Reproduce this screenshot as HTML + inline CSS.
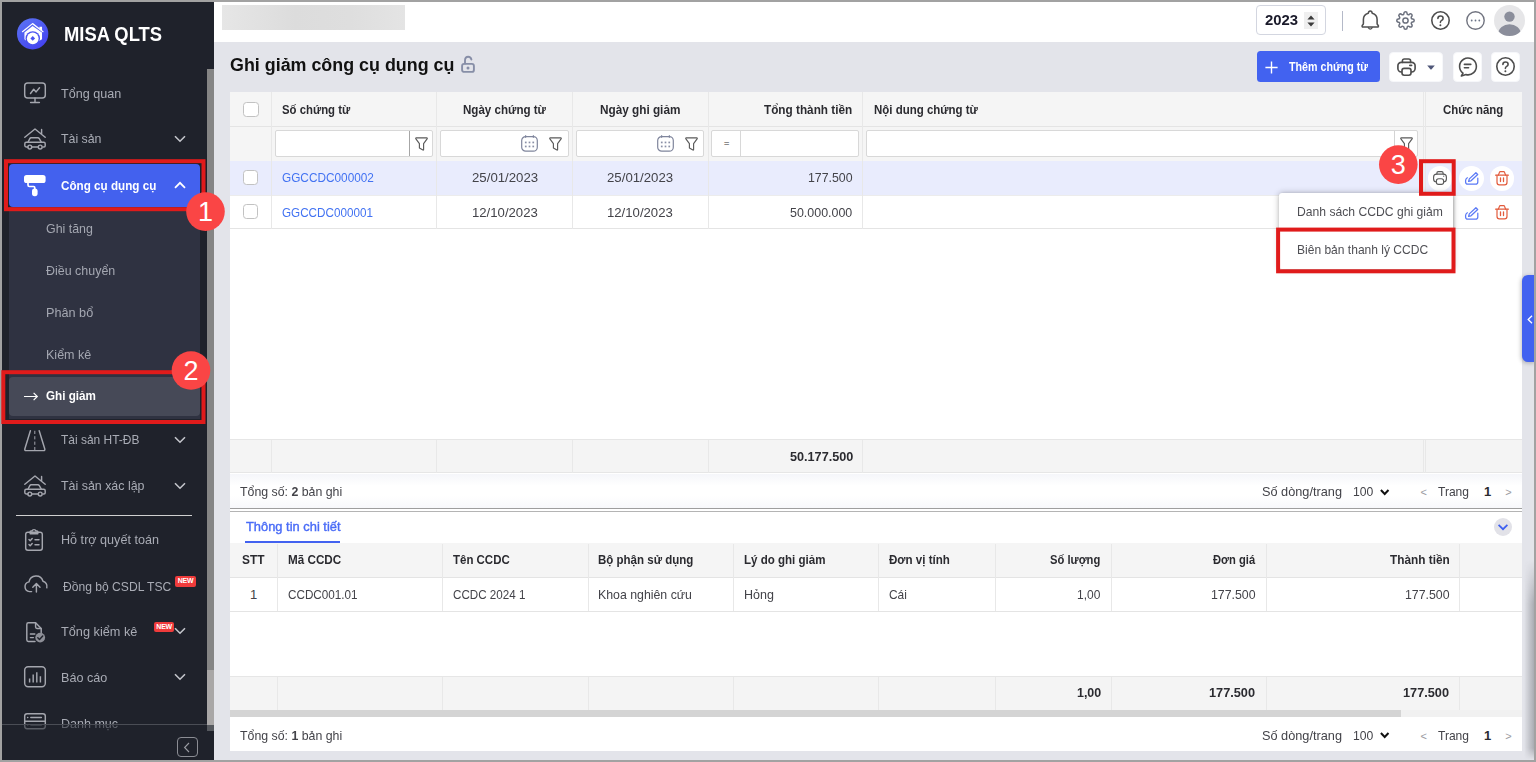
<!DOCTYPE html>
<html lang="vi">
<head>
<meta charset="utf-8">
<title>MISA QLTS - Ghi giảm công cụ dụng cụ</title>
<style>
*{box-sizing:border-box;margin:0;padding:0}
html,body{width:1536px;height:762px;overflow:hidden;background:#a2a2a2;font-family:"Liberation Sans",sans-serif;font-size:13px;color:#434349}
#app{position:absolute;left:0;top:0;width:1536px;height:762px;background:#e3e4ea;overflow:hidden}
#frame{position:absolute;left:0;top:0;width:1536px;height:762px;border:2px solid #a2a2a2;z-index:50;pointer-events:none}
.a{position:absolute}
.t{position:absolute;white-space:nowrap;line-height:16px;height:16px;transform-origin:0 50%}
.b{font-weight:bold}
svg{position:absolute;overflow:visible}
/* sidebar */
#side{position:absolute;left:0;top:0;width:214px;height:762px;background:#1f222b;overflow:hidden}
#side .t{color:#a9acb5}
#side .chev{stroke:#c4c6cc}
.ico{stroke:#a4a6ae;fill:none;stroke-width:1.45;stroke-linecap:round;stroke-linejoin:round}
/* top bar */
#top{position:absolute;left:214px;top:0;width:1322px;height:41.6px;background:#fff}
/* grid */
.hd{background:#f5f5f5}
.vl{position:absolute;width:1px;background:#e8e8e8}
.hl{position:absolute;height:1px;background:#e4e4e4}
.inp{position:absolute;background:#fff;border:1px solid #d8d8d8;border-radius:2px}
.cb{position:absolute;width:15.4px;height:15.2px;background:#fff;border:1px solid #c2c2c2;border-radius:3.5px}
.hdt{color:#2b2b30;font-weight:bold}
.lnk{color:#4272f2}
.new{position:absolute;background:#ef3b3b;border-radius:2px;color:#fff;font-size:7px;font-weight:bold;line-height:10.5px;height:10.5px;text-align:center;letter-spacing:-.2px}
.badge{position:absolute;width:38.5px;height:38.5px;border-radius:50%;background:#fa4444;color:#fff;text-align:center}
</style>
</head>
<body>
<div id="app">

<!-- ================= SIDEBAR ================= -->
<div id="side">
<!-- logo -->
<svg style="left:16.5px;top:18.1px" width="31.3" height="31.6" viewBox="0 0 32 32">
  <defs><linearGradient id="lg" x1="0.1" y1="0" x2="0.8" y2="1"><stop offset="0" stop-color="#5b74f4"/><stop offset="1" stop-color="#4340f0"/></linearGradient></defs>
  <circle cx="16" cy="16" r="16" fill="url(#lg)"/>
  <path d="M5.6 13.8 L15.9 5.6 L26.6 13.8" fill="none" stroke="#fff" stroke-width="1.3" stroke-linecap="round" stroke-linejoin="round"/>
  <path d="M22.9 8.9 h2.7 v4 l-2.7 -2.1z" fill="#fff"/>
  <path d="M7.6 14.6 L15.9 8 L25.6 14.6 V21.6 L23 23 H9.4 L7.6 21.6z" fill="#fff"/>
  <circle cx="16.1" cy="20.7" r="7.4" fill="#4a52f1"/>
  <circle cx="16.1" cy="20.7" r="6" fill="#fff"/>
  <path d="M16.1 18.3 l2.4 2.4 -2.4 2.4 -2.4 -2.4z" fill="#4a52f1"/>
</svg>
<span class="t b" style="left:64px;top:22.4px;font-size:20px;line-height:24px;height:24px;color:#fff;transform:scaleX(0.9187)">MISA QLTS</span>

<!-- Tổng quan -->
<svg class="ico" style="left:24px;top:82px" width="22" height="22" viewBox="0 0 22 22">
  <rect x="0.7" y="1" width="20.6" height="15" rx="3"/><path d="M6.5 11.5 l3.2 -4.2 2.4 2.6 3.4 -4.2"/><path d="M11 16 v4.3 M6.6 20.5 h8.8"/>
</svg>
<span class="t" style="left:61.4px;top:85.5px;transform:scaleX(0.9683)">Tổng quan</span>

<!-- Tài sản -->
<svg class="ico" style="left:24px;top:128px" width="22" height="22" viewBox="0 0 22 22">
  <path d="M0.8 9.2 L11 1 L21.2 9.2 M17.6 1.4 v4.6"/>
  <path d="M4 14.2 l1.8 -3.6 q0.4 -0.8 1.4 -0.8 h6.6 q1 0 1.5 0.8 l2 3.6"/>
  <path d="M2.2 14.2 h17.6 q1.4 0 1.4 1.6 v2 q0 1.2 -1.2 1.2 h-1 M7.6 19 h6.8 M4 19 h-1.8 q-1.4 0 -1.4 -1.4 v-1.8 q0 -1.6 1.4 -1.6"/>
  <circle cx="5.8" cy="19" r="1.9"/><circle cx="16.2" cy="19" r="1.9"/>
</svg>
<span class="t" style="left:61.4px;top:131px;transform:scaleX(0.9498)">Tài sản</span>
<svg style="left:174px;top:135px" width="12" height="8" viewBox="0 0 12 8"><path class="chev" d="M1 1.2 L6 6.2 L11 1.2" fill="none" stroke-width="1.6"/></svg>

<!-- active: Công cụ dụng cụ -->
<div class="a" style="left:9px;top:163.6px;width:191.3px;height:43.6px;background:#4361ee;border-radius:4px"></div>
<svg style="left:24px;top:174.6px" width="22" height="22" viewBox="0 0 22 22">
  <rect x="0" y="0" width="21.6" height="8" rx="2.6" fill="#fff"/>
  <path d="M4 7.5 v2.6 q0 1.4 1.4 1.4 h4.2 q1.2 0 1.2 1.4 v1.5" fill="none" stroke="#fff" stroke-width="1.7"/>
  <rect x="8" y="13.6" width="5.6" height="7.6" rx="2.6" fill="#fff"/>
</svg>
<span class="t b" style="left:61.4px;top:177.6px;color:#fff;transform:scaleX(0.8977)">Công cụ dụng cụ</span>
<svg style="left:174px;top:181px" width="12" height="8" viewBox="0 0 12 8"><path d="M1 6.8 L6 1.8 L11 6.8" fill="none" stroke="#fff" stroke-width="1.8"/></svg>

<!-- submenu -->
<div class="a" style="left:9px;top:207px;width:191.3px;height:212px;background:#2f3241"></div>
<span class="t" style="left:45.7px;top:221px;color:#a4a7b1;transform:scaleX(0.9541)">Ghi tăng</span>
<span class="t" style="left:45.7px;top:263px;color:#a4a7b1;transform:scaleX(0.9588)">Điều chuyển</span>
<span class="t" style="left:45.7px;top:305px;color:#a4a7b1;transform:scaleX(0.9745)">Phân bổ</span>
<span class="t" style="left:45.7px;top:347px;color:#a4a7b1;transform:scaleX(0.9645)">Kiểm kê</span>
<div class="a" style="left:9px;top:377px;width:191.3px;height:39px;background:#464957;border-radius:4px"></div>
<svg style="left:24.4px;top:392px" width="14" height="9" viewBox="0 0 14 9"><path d="M0 4.5 h13.2 M9.6 0.9 L13.3 4.5 L9.6 8.1" fill="none" stroke="#fff" stroke-width="1.2"/></svg>
<span class="t b" style="left:45.7px;top:388px;color:#fff;transform:scaleX(0.8971)">Ghi giảm</span>

<!-- Tài sản HT-ĐB -->
<svg class="ico" style="left:24px;top:430px" width="22" height="22" viewBox="0 0 22 22">
  <path d="M6.4 0.7 L0.8 19 q-0.3 1.6 1.2 1.6 h17.6 q1.5 0 1.2 -1.6 L15.2 0.7"/><path d="M10.8 0.8 v20" stroke-dasharray="3.2 2.2" stroke-linecap="butt" stroke-width="1"/>
</svg>
<span class="t" style="left:61.4px;top:431.5px;transform:scaleX(0.9196)">Tài sản HT-ĐB</span>
<svg style="left:174px;top:436px" width="12" height="8" viewBox="0 0 12 8"><path class="chev" d="M1 1.2 L6 6.2 L11 1.2" fill="none" stroke-width="1.6"/></svg>

<!-- Tài sản xác lập -->
<svg class="ico" style="left:24px;top:475px" width="22" height="22" viewBox="0 0 22 22">
  <path d="M0.8 9.2 L11 1 L21.2 9.2 M17.6 1.4 v4.6"/>
  <path d="M4 14.2 l1.8 -3.6 q0.4 -0.8 1.4 -0.8 h6.6 q1 0 1.5 0.8 l2 3.6"/>
  <path d="M2.2 14.2 h17.6 q1.4 0 1.4 1.6 v2 q0 1.2 -1.2 1.2 h-1 M7.6 19 h6.8 M4 19 h-1.8 q-1.4 0 -1.4 -1.4 v-1.8 q0 -1.6 1.4 -1.6"/>
  <circle cx="5.8" cy="19" r="1.9"/><circle cx="16.2" cy="19" r="1.9"/>
</svg>
<span class="t" style="left:61.4px;top:477.5px;transform:scaleX(0.9550)">Tài sản xác lập</span>
<svg style="left:174px;top:482px" width="12" height="8" viewBox="0 0 12 8"><path class="chev" d="M1 1.2 L6 6.2 L11 1.2" fill="none" stroke-width="1.6"/></svg>

<div class="a" style="left:16.2px;top:514.8px;width:176px;height:1px;background:#d0d0d0"></div>

<!-- Hỗ trợ quyết toán -->
<svg class="ico" style="left:25px;top:529px" width="18" height="22" viewBox="0 0 18 22">
  <rect x="0.7" y="3.2" width="16.6" height="18" rx="2.2"/><path d="M5.2 4.8 v-2 q0 -0.8 0.8 -0.8 h1 q0.4 -1.4 2 -1.4 t2 1.4 h1 q0.8 0 0.8 0.8 v2z"/>
  <path d="M4 10.6 l1.2 1.2 2 -2.2 M10 10.8 h4 M4 15.6 l1.2 1.2 2 -2.2 M10 15.8 h4"/>
</svg>
<span class="t" style="left:61.4px;top:532px;transform:scaleX(0.9700)">Hỗ trợ quyết toán</span>

<!-- Đồng bộ CSDL TSC -->
<svg class="ico" style="left:24px;top:575px" width="24" height="18" viewBox="0 0 24 18">
  <path d="M7.6 16.6 h-2 a4.9 4.9 0 0 1 -0.6 -9.7 a7.2 7.2 0 0 1 14 -0.6 a5.2 5.2 0 0 1 3.8 6.4"/><path d="M12.4 17 v-8 M8.8 12.2 l3.6 -3.6 3.6 3.6"/>
</svg>
<span class="t" style="left:63px;top:578.5px;transform:scaleX(0.9309)">Đồng bộ CSDL TSC</span>
<div class="new" style="left:175.3px;top:576.1px;width:20.7px">NEW</div>

<!-- Tổng kiểm kê -->
<svg class="ico" style="left:26px;top:621.6px" width="20" height="21" viewBox="0 0 20 21">
  <path d="M9 19.4 h-6.6 q-1.6 0 -1.6 -1.6 v-15.4 q0 -1.6 1.6 -1.6 h7.2 l5.6 5.6 v4"/><path d="M9.6 1 v4 q0 1.4 1.4 1.4 h4"/><path d="M4.4 12 h4.4 M4.4 15.6 h3"/>
  <circle cx="14.2" cy="15.6" r="4.9" fill="#8d8f97" stroke="none"/><path d="M11.8 15.7 l1.7 1.7 3.2 -3.4" stroke="#1f222b"/>
</svg>
<span class="t" style="left:61.4px;top:623.5px;transform:scaleX(0.9789)">Tổng kiểm kê</span>
<div class="new" style="left:154px;top:621.6px;width:20.3px">NEW</div>
<svg style="left:174px;top:626.5px" width="12" height="8" viewBox="0 0 12 8"><path class="chev" d="M1 1.2 L6 6.2 L11 1.2" fill="none" stroke-width="1.6"/></svg>

<!-- Báo cáo -->
<svg class="ico" style="left:24px;top:666px" width="22" height="22" viewBox="0 0 22 22">
  <rect x="0.7" y="0.7" width="20.6" height="20" rx="3.4"/><path d="M5.6 12.6 v4 M9.2 8.6 v8 M12.8 6.2 v10.4 M16.4 10.2 v6.4" stroke-linecap="butt"/>
</svg>
<span class="t" style="left:61.4px;top:669.5px;transform:scaleX(0.9685)">Báo cáo</span>
<svg style="left:174px;top:673px" width="12" height="8" viewBox="0 0 12 8"><path class="chev" d="M1 1.2 L6 6.2 L11 1.2" fill="none" stroke-width="1.6"/></svg>

<!-- Danh mục -->
<svg class="ico" style="left:24px;top:713px" width="22" height="17" viewBox="0 0 22 17">
  <rect x="0.7" y="0.7" width="20.6" height="15" rx="2.4"/><path d="M0.8 8.2 h20.4 M3.6 4.4 h0.2 M6.8 4.4 h10.6 M3.6 11.8 h0.2 M6.8 11.8 h10.6"/>
</svg>
<span class="t" style="left:61.4px;top:715.5px;transform:scaleX(0.9637)">Danh mục</span>

<!-- footer -->
<div class="a" style="left:0;top:724.5px;width:214px;height:37.5px;background:rgba(31,34,43,.55)"></div>
<div class="a" style="left:0;top:724px;width:207px;height:1px;background:#4a4d55"></div>
<div class="a" style="left:177.3px;top:736.7px;width:21.2px;height:20px;border:1px solid #8b8d94;border-radius:4px"></div>
<svg style="left:183px;top:741.5px" width="8" height="11" viewBox="0 0 8 11"><path d="M6 1 L1.6 5.5 L6 10" fill="none" stroke="#9a9ca3" stroke-width="1.1"/></svg>

<!-- scrollbar -->
<div class="a" style="left:207.2px;top:68.8px;width:6.8px;height:600.8px;background:#858585"></div>
<div class="a" style="left:207.2px;top:669.6px;width:6.8px;height:55px;background:#a9a7a7"></div>
<div class="a" style="left:207.2px;top:724.6px;width:6.8px;height:6.4px;background:#56595f"></div>
</div>

<!-- ================= TOP BAR ================= -->
<div id="top">
<div class="a" style="left:8px;top:5px;width:183px;height:25px;background:linear-gradient(90deg,#e6e6e6,#dcdcdc 40%,#dedede 70%,#e4e4e4)"></div>
<!-- year -->
<div class="a" style="left:1042.4px;top:5.4px;width:70px;height:29.4px;border:1px solid #d3d6e0;border-radius:4px;background:#fff"></div>
<span class="t b" style="left:1050.7px;top:11.8px;color:#1a1a2a;font-size:15px;transform:scaleX(0.9918)">2023</span>
<div class="a" style="left:1089.6px;top:11.6px;width:14.4px;height:17.4px;background:#efefef"></div>
<svg style="left:1092.8px;top:14.6px" width="8" height="12" viewBox="0 0 8 12"><path d="M0.4 4.6 L4 0.6 L7.6 4.6z M0.4 7.4 L4 11.4 L7.6 7.4z" fill="#3b3b3b"/></svg>
<div class="a" style="left:1128px;top:11px;width:1px;height:20px;background:#b4b9c8"></div>
<!-- bell -->
<svg style="left:1147px;top:10px" width="19" height="21" viewBox="0 0 19 21" fill="none" stroke="#505050" stroke-width="1.55" stroke-linejoin="round" stroke-linecap="round">
  <path d="M7.3 3.2 q0.2 -2.3 1.95 -2.3 t1.95 2.3 C13.6 3.8 16.1 5.6 16.1 9.6 V13.4 q0 0.9 0.9 1.7 q0.9 0.9 0.1 1.8 H1.4 q-0.8 -0.9 0.1 -1.8 q0.9 -0.8 0.9 -1.7 V9.6 C2.4 5.6 4.9 3.8 7.3 3.2z"/><path d="M7.3 17.6 q1.95 3 3.9 0" stroke-width="1.3"/>
</svg>
<!-- gear -->
<svg style="left:1181.8px;top:10.9px" width="19" height="19" viewBox="0 0 24 24" fill="none" stroke="#6c717e" stroke-width="1.9" stroke-linejoin="round">
  <circle cx="12" cy="12" r="3.3"/>
  <path d="M19.4 15a1.65 1.65 0 0 0 .33 1.82l.06.06a2 2 0 1 1-2.83 2.83l-.06-.06a1.65 1.65 0 0 0-1.82-.33 1.65 1.65 0 0 0-1 1.51V21a2 2 0 1 1-4 0v-.09A1.65 1.65 0 0 0 9 19.4a1.65 1.65 0 0 0-1.82.33l-.06.06a2 2 0 1 1-2.83-2.83l.06-.06a1.65 1.65 0 0 0 .33-1.82 1.65 1.65 0 0 0-1.51-1H3a2 2 0 1 1 0-4h.09A1.65 1.65 0 0 0 4.6 9a1.65 1.65 0 0 0-.33-1.82l-.06-.06a2 2 0 1 1 2.83-2.83l.06.06a1.65 1.65 0 0 0 1.82.33H9a1.65 1.65 0 0 0 1-1.51V3a2 2 0 1 1 4 0v.09a1.65 1.65 0 0 0 1 1.51 1.65 1.65 0 0 0 1.82-.33l.06-.06a2 2 0 1 1 2.83 2.83l-.06.06a1.65 1.65 0 0 0-.33 1.82V9a1.65 1.65 0 0 0 1.51 1H21a2 2 0 1 1 0 4h-.09a1.65 1.65 0 0 0-1.51 1z"/>
</svg>
<!-- help -->
<svg style="left:1216.6px;top:10.9px" width="19" height="19" viewBox="0 0 19 19" fill="none" stroke="#4c4c4c" stroke-width="1.55" stroke-linecap="round">
  <circle cx="9.5" cy="9.5" r="8.7"/><path d="M6.9 7.4 q0 -2.4 2.6 -2.4 t2.6 2.2 q0 1.4 -1.4 2.2 t-1.3 2"/><circle cx="9.4" cy="14.2" r="1" fill="#4a4a4a" stroke="none"/>
</svg>
<!-- more -->
<svg style="left:1251.5px;top:10.9px" width="19" height="19" viewBox="0 0 19 19" fill="none" stroke="#70737f" stroke-width="1.4">
  <circle cx="9.5" cy="9.5" r="8.7"/><g fill="#6b7488" stroke="none"><circle cx="5.7" cy="9.5" r="0.9"/><circle cx="9.5" cy="9.5" r="0.9"/><circle cx="13.3" cy="9.5" r="0.9"/></g>
</svg>
<!-- avatar -->
<svg style="left:1280.2px;top:4.8px" width="31" height="31" viewBox="0 0 31 31">
  <defs><clipPath id="av"><circle cx="15.5" cy="15.5" r="15.5"/></clipPath></defs>
  <circle cx="15.5" cy="15.5" r="15.5" fill="#e6e6e8"/>
  <g clip-path="url(#av)" fill="#8b8e9b"><circle cx="15.5" cy="11.6" r="5.2"/><ellipse cx="15.5" cy="28.5" rx="11.2" ry="9.3"/></g>
</svg>
</div>

<!-- ================= CONTENT ================= -->
<div id="main" class="a" style="left:0;top:0;width:1536px;height:762px">
<!-- title -->
<span class="t b" style="left:230.2px;top:54.2px;font-size:18px;line-height:22px;height:22px;color:#111;transform:scaleX(0.9929)">Ghi giảm công cụ dụng cụ</span>
<svg style="left:461px;top:55.2px" width="14" height="18" viewBox="0 0 14 18" fill="none" stroke="#878ea7" stroke-width="1.9" stroke-linecap="round">
  <rect x="1.1" y="8.9" width="11.8" height="8" rx="2"/><path d="M4 8.6 V5.4 q0 -3.7 3.2 -3.7 q2.6 0 3.2 2.8"/><circle cx="7" cy="12.9" r="1.5" fill="#878ea7" stroke="none"/>
</svg>

<!-- toolbar buttons -->
<div class="a" style="left:1257px;top:51.3px;width:123px;height:31px;background:#4262f0;border-radius:3.5px"></div>
<svg style="left:1264.5px;top:60.5px" width="13" height="13" viewBox="0 0 13 13"><path d="M6.5 0.4 v12.2 M0.4 6.5 h12.2" stroke="#fff" stroke-width="1.4" fill="none"/></svg>
<span class="t b" style="left:1288.5px;top:58.8px;color:#fff;font-size:13px;transform:scaleX(0.8220)">Thêm chứng từ</span>

<div class="a" style="left:1388.7px;top:51.6px;width:54.6px;height:30px;background:#fff;border:1px solid #f6f7fa;border-radius:4px"></div>
<svg style="left:1396.6px;top:58.2px" width="19" height="18" viewBox="0 0 19 18" fill="none" stroke="#4d4d4d" stroke-width="1.65" stroke-linejoin="round" stroke-linecap="round">
  <path d="M5.4 4.4 V3 q0 -2 2 -2 h4.2 q2 0 2 2 v1.4"/><rect x="0.9" y="4.4" width="17.2" height="9.6" rx="3.4"/><rect x="5" y="10.4" width="9" height="6.8" rx="2.2" fill="#fff"/><path d="M12.8 7.4 h1.8"/>
</svg>
<svg style="left:1427px;top:65.1px" width="8" height="5" viewBox="0 0 8 5"><path d="M0.2 0.4 h7.6 L4.4 4.4 q-0.4 0.4 -0.8 0z" fill="#4f5678"/></svg>

<div class="a" style="left:1452.9px;top:51.6px;width:29.2px;height:30px;background:#fff;border:1px solid #f6f7fa;border-radius:4px"></div>
<svg style="left:1458px;top:57.2px" width="19" height="20" viewBox="0 0 19 20" fill="none" stroke="#4d4d4d" stroke-width="1.6" stroke-linecap="round" stroke-linejoin="round">
  <path d="M5 16.2 A8.4 8.4 0 1 1 8 17.6 L3.4 19 z"/><path d="M6.4 7.4 h6.4 M6.4 10.8 h4.2"/>
</svg>

<div class="a" style="left:1491.1px;top:51.6px;width:29.4px;height:30px;background:#fff;border:1px solid #f6f7fa;border-radius:4px"></div>
<svg style="left:1496.4px;top:57.3px" width="19" height="19" viewBox="0 0 19 19" fill="none" stroke="#4d4d4d" stroke-width="1.6" stroke-linecap="round">
  <circle cx="9.5" cy="9.5" r="8.7"/><path d="M6.9 7.4 q0 -2.4 2.6 -2.4 t2.6 2.2 q0 1.4 -1.4 2.2 t-1.3 2"/><circle cx="9.4" cy="14.2" r="1" fill="#4d4d4d" stroke="none"/>
</svg>

<!-- ============ GRID PANEL ============ -->
<div class="a" style="left:230px;top:92px;width:1291.5px;height:659px;background:#fff"></div>
<!-- header + filter rows -->
<div class="a hd" style="left:230px;top:92px;width:1291.5px;height:69px"></div>
<div class="hl" style="left:230px;top:126px;width:1291.5px"></div>
<div class="hl" style="left:230px;top:160.5px;width:1291.5px"></div>
<!-- selected row -->
<div class="a" style="left:230px;top:161.3px;width:1291.5px;height:33.7px;background:#e9ecfd"></div>
<div class="hl" style="left:230px;top:195px;width:1291.5px;background:#ececec"></div>
<div class="hl" style="left:230px;top:228.2px;width:1291.5px"></div>
<!-- summary row -->
<div class="a" style="left:230px;top:439.3px;width:1291.5px;height:34.2px;background:#f4f4f4;border-top:1px solid #e6e6e6;border-bottom:1px solid #e6e6e6"></div>
<!-- vertical lines upper grid -->
<div class="vl" style="left:271px;top:92px;height:136.5px"></div>
<div class="vl" style="left:436px;top:92px;height:136.5px"></div>
<div class="vl" style="left:572.4px;top:92px;height:136.5px"></div>
<div class="vl" style="left:707.6px;top:92px;height:136.5px"></div>
<div class="vl" style="left:862.4px;top:92px;height:136.5px"></div>
<div class="vl" style="left:1422.6px;top:92px;height:136.5px"></div>
<div class="vl" style="left:1425px;top:92px;height:136.5px"></div>
<div class="vl" style="left:271px;top:440px;height:33px"></div>
<div class="vl" style="left:436px;top:440px;height:33px"></div>
<div class="vl" style="left:572.4px;top:440px;height:33px"></div>
<div class="vl" style="left:707.6px;top:440px;height:33px"></div>
<div class="vl" style="left:862.4px;top:440px;height:33px"></div>
<div class="vl" style="left:1422.6px;top:440px;height:33px"></div>
<div class="vl" style="left:1425px;top:440px;height:33px"></div>

<!-- header texts -->
<div class="cb" style="left:243.3px;top:101.7px"></div>
<span class="t hdt" style="left:282.4px;top:101.8px;transform:scaleX(0.8738)">Số chứng từ</span>
<span class="t hdt" style="left:463px;top:101.8px;transform:scaleX(0.8902)">Ngày chứng từ</span>
<span class="t hdt" style="left:599.8px;top:101.8px;transform:scaleX(0.9048)">Ngày ghi giảm</span>
<span class="t hdt" style="left:764px;top:101.8px;transform:scaleX(0.9048)">Tổng thành tiền</span>
<span class="t hdt" style="left:873.7px;top:101.8px;transform:scaleX(0.8824)">Nội dung chứng từ</span>
<span class="t hdt" style="left:1443.4px;top:101.8px;transform:scaleX(0.8785)">Chức năng</span>

<!-- filter inputs -->
<div class="inp" style="left:275.2px;top:130.4px;width:157.6px;height:26.4px"></div>
<div class="vl" style="left:409.2px;top:131px;height:25px;background:#a6a6a6"></div>
<div class="inp" style="left:440.3px;top:130.4px;width:128.4px;height:26.4px"></div>
<div class="inp" style="left:575.7px;top:130.4px;width:128.7px;height:26.4px"></div>
<div class="inp" style="left:711.4px;top:130.4px;width:147.8px;height:26.4px"></div>
<div class="vl" style="left:740.2px;top:131px;height:25px;background:#d8d8d8"></div>
<span class="t b" style="left:723.9px;top:136.1px;font-size:9px;color:#8c8c8c">=</span>
<div class="inp" style="left:866.4px;top:130.4px;width:552px;height:26.4px"></div>
<div class="vl" style="left:1393.7px;top:131px;height:25px;background:#d4d4d4"></div>

<!-- filter icons -->
<svg style="left:415.3px;top:136.6px" width="13" height="14" viewBox="0 0 13 14"><path d="M1.3 0.9 h10.4 q1 0 0.4 0.9 L8.6 6.6 v6 q0 0.8 -0.7 0.3 L4.4 11 V6.6 L0.9 1.8 q-0.6 -0.9 0.4 -0.9z" fill="none" stroke="#5a5a5a" stroke-width="1.15" stroke-linejoin="round"/></svg>
<svg style="left:520.6px;top:135.3px" width="17" height="17" viewBox="0 0 17 17"><rect x="0.7" y="1.6" width="15.6" height="14.6" rx="4" fill="none" stroke="#7f859c" stroke-width="1.2"/><path d="M4.6 0.3 v2.4 M12.4 0.3 v2.4" stroke="#7f859c" stroke-width="1.2"/><g fill="#8a90a6"><rect x="3.9" y="6.6" width="1.7" height="1.7"/><rect x="7.65" y="6.6" width="1.7" height="1.7"/><rect x="11.4" y="6.6" width="1.7" height="1.7"/><rect x="3.9" y="10.6" width="1.7" height="1.7"/><rect x="7.65" y="10.6" width="1.7" height="1.7"/><rect x="11.4" y="10.6" width="1.7" height="1.7"/></g></svg>
<svg style="left:548.9px;top:136.6px" width="13" height="14" viewBox="0 0 13 14"><path d="M1.3 0.9 h10.4 q1 0 0.4 0.9 L8.6 6.6 v6 q0 0.8 -0.7 0.3 L4.4 11 V6.6 L0.9 1.8 q-0.6 -0.9 0.4 -0.9z" fill="none" stroke="#5a5a5a" stroke-width="1.15" stroke-linejoin="round"/></svg>
<svg style="left:656.6px;top:135.3px" width="17" height="17" viewBox="0 0 17 17"><rect x="0.7" y="1.6" width="15.6" height="14.6" rx="4" fill="none" stroke="#7f859c" stroke-width="1.2"/><path d="M4.6 0.3 v2.4 M12.4 0.3 v2.4" stroke="#7f859c" stroke-width="1.2"/><g fill="#8a90a6"><rect x="3.9" y="6.6" width="1.7" height="1.7"/><rect x="7.65" y="6.6" width="1.7" height="1.7"/><rect x="11.4" y="6.6" width="1.7" height="1.7"/><rect x="3.9" y="10.6" width="1.7" height="1.7"/><rect x="7.65" y="10.6" width="1.7" height="1.7"/><rect x="11.4" y="10.6" width="1.7" height="1.7"/></g></svg>
<svg style="left:684.9px;top:136.6px" width="13" height="14" viewBox="0 0 13 14"><path d="M1.3 0.9 h10.4 q1 0 0.4 0.9 L8.6 6.6 v6 q0 0.8 -0.7 0.3 L4.4 11 V6.6 L0.9 1.8 q-0.6 -0.9 0.4 -0.9z" fill="none" stroke="#5a5a5a" stroke-width="1.15" stroke-linejoin="round"/></svg>
<svg style="left:1399.6px;top:136.6px" width="13" height="14" viewBox="0 0 13 14"><path d="M1.3 0.9 h10.4 q1 0 0.4 0.9 L8.6 6.6 v6 q0 0.8 -0.7 0.3 L4.4 11 V6.6 L0.9 1.8 q-0.6 -0.9 0.4 -0.9z" fill="none" stroke="#5a5a5a" stroke-width="1.15" stroke-linejoin="round"/></svg>
<!-- rows -->
<div class="cb" style="left:243px;top:170px"></div>
<span class="t lnk" style="left:282.4px;top:170.2px;transform:scaleX(0.9085)">GGCCDC000002</span>
<span class="t" style="left:471.5px;top:170.2px;transform:scaleX(1.0172)">25/01/2023</span>
<span class="t" style="left:607px;top:170.2px;transform:scaleX(1.0172)">25/01/2023</span>
<span class="t" style="left:807.6px;top:170.2px;transform:scaleX(0.9489)">177.500</span>
<div class="cb" style="left:243px;top:204.3px"></div>
<span class="t lnk" style="left:282.4px;top:204.7px;transform:scaleX(0.8986)">GGCCDC000001</span>
<span class="t" style="left:471.5px;top:204.7px;transform:scaleX(1.0111)">12/10/2023</span>
<span class="t" style="left:607px;top:204.7px;transform:scaleX(1.0111)">12/10/2023</span>
<span class="t" style="left:790.3px;top:204.7px;transform:scaleX(0.9573)">50.000.000</span>
<span class="t b" style="left:790.3px;top:448.5px;color:#2b2b30;transform:scaleX(0.9727)">50.177.500</span>

<!-- row actions -->
<div class="a" style="left:1427.6px;top:165.9px;width:24.8px;height:24.8px;border-radius:50%;background:#fff"></div>
<div class="a" style="left:1458.8px;top:165.9px;width:24.8px;height:24.8px;border-radius:50%;background:#fff"></div>
<div class="a" style="left:1489.6999999999998px;top:165.9px;width:24.8px;height:24.8px;border-radius:50%;background:#fff"></div>
<svg style="left:1433px;top:171.2px" width="14" height="14" viewBox="0 0 14 14" fill="none" stroke="#595959" stroke-width="1.15" stroke-linejoin="round" stroke-linecap="round"><path d="M3.9 3.1 V2 q0 -1.4 1.4 -1.4 h3.4 q1.4 0 1.4 1.4 v1.1"/><rect x="0.6" y="3.1" width="12.8" height="7.9" rx="3"/><rect x="3.4" y="7.7" width="7.2" height="5.7" rx="2.2" fill="#fff"/><path d="M10.4 5.2 h0.5" stroke-width="0.9"/></svg>
<svg style="left:1464.6px;top:172.1px" width="14" height="13" viewBox="0 0 14 13" fill="none" stroke="#5b7af6" stroke-width="1.25" stroke-linejoin="round" stroke-linecap="round"><path d="M3.6 9.3 L4.3 6.9 L10.9 0.7 L12.7 2.5 L6 8.8 z"/><path d="M2.3 5.7 Q0.6 6.6 0.6 8.6 v1.4 q0 2.2 2.2 2.2 h7.8 q2.2 0 2.2 -2.2 V6.2"/></svg>
<svg style="left:1495px;top:170.5px" width="14" height="14.4" viewBox="0 0 14 14.4" fill="none" stroke="#e25b3c" stroke-width="1.2" stroke-linejoin="round" stroke-linecap="round"><path d="M0.6 4.2 h12.8"/><path d="M3.4 4.1 L4.5 1.2 q0.2 -0.6 0.9 -0.6 h3.2 q0.7 0 0.9 0.6 L10.6 4.1"/><path d="M2 4.4 v6.8 q0 2.6 2.4 2.6 h5.2 q2.4 0 2.4 -2.6 V4.4"/><path d="M5.5 6.8 v3.8 M8.5 6.8 v3.8" stroke-width="1.3"/></svg>
<svg style="left:1464.6px;top:206.6px" width="14" height="13" viewBox="0 0 14 13" fill="none" stroke="#5b7af6" stroke-width="1.25" stroke-linejoin="round" stroke-linecap="round"><path d="M3.6 9.3 L4.3 6.9 L10.9 0.7 L12.7 2.5 L6 8.8 z"/><path d="M2.3 5.7 Q0.6 6.6 0.6 8.6 v1.4 q0 2.2 2.2 2.2 h7.8 q2.2 0 2.2 -2.2 V6.2"/></svg>
<svg style="left:1495px;top:205px" width="14" height="14.4" viewBox="0 0 14 14.4" fill="none" stroke="#e25b3c" stroke-width="1.2" stroke-linejoin="round" stroke-linecap="round"><path d="M0.6 4.2 h12.8"/><path d="M3.4 4.1 L4.5 1.2 q0.2 -0.6 0.9 -0.6 h3.2 q0.7 0 0.9 0.6 L10.6 4.1"/><path d="M2 4.4 v6.8 q0 2.6 2.4 2.6 h5.2 q2.4 0 2.4 -2.6 V4.4"/><path d="M5.5 6.8 v3.8 M8.5 6.8 v3.8" stroke-width="1.3"/></svg>

<!-- dropdown menu -->
<div class="a" style="left:1278.8px;top:192.8px;width:174.6px;height:76.4px;background:#fff;border-radius:3px;box-shadow:0 0 6px rgba(0,0,0,.28),1px 1px 3px rgba(0,0,0,.22)"></div>
<span class="t" style="left:1296.8px;top:204.2px;color:#4f4f54;transform:scaleX(0.9348)">Danh sách CCDC ghi giảm</span>
<span class="t" style="left:1296.8px;top:242.1px;color:#4f4f54;transform:scaleX(0.9256)">Biên bản thanh lý CCDC</span>
<!-- paging footer -->
<div class="a" style="left:230px;top:474px;width:1291.5px;height:34px;background:linear-gradient(180deg,#f5f6fa,#fff 35%,#fff 65%,#f7f8fb)"></div>

<span class="t" style="left:240px;top:484px;transform:scaleX(0.9489)">Tổng số: <b>2</b> bản ghi</span>
<span class="t" style="left:1261.6px;top:484px;transform:scaleX(0.9793)">Số dòng/trang</span>
<span class="t" style="left:1353.2px;top:484px;transform:scaleX(0.9353)">100</span>
<svg style="left:1379.6px;top:488.7px" width="9.4" height="7" viewBox="0 0 9.4 7"><path d="M0.9 1 L4.7 5 L8.5 1" fill="none" stroke="#111" stroke-width="2"/></svg>
<span class="t" style="left:1420.6px;top:484px;font-size:11px;color:#9b9b9f">&lt;</span>
<span class="t" style="left:1437.6px;top:484px;transform:scaleX(0.9258)">Trang</span>
<span class="t b" style="left:1484px;top:484px;color:#2b2b30">1</span>
<span class="t" style="left:1505.2px;top:484px;font-size:11px;color:#9b9b9f">&gt;</span>
<div class="hl" style="left:230px;top:508px;width:1291.5px;background:#9e9e9e"></div>
<div class="hl" style="left:230px;top:511px;width:1291.5px;background:#b4b4b4"></div>

<!-- detail tab -->
<span class="t" style="left:245.6px;top:518.6px;color:#4a6cf7;-webkit-text-stroke:0.4px #4a6cf7;transform:scaleX(0.9907)">Thông tin chi tiết</span>
<div class="a" style="left:245px;top:540.7px;width:95.2px;height:2.3px;background:#4262f0"></div>
<svg style="left:1493.6px;top:518.1px" width="18" height="18" viewBox="0 0 18 18"><circle cx="9" cy="9" r="9" fill="#e2e2e8"/><path d="M4.6 6.8 L9 11.2 L13.4 6.8" fill="none" stroke="#3d5ff0" stroke-width="1.7"/></svg>

<!-- detail grid -->
<div class="a hd" style="left:230px;top:543px;width:1291.5px;height:34.6px;border-bottom:1px solid #e4e4e4"></div>
<div class="hl" style="left:230px;top:610.8px;width:1291.5px"></div>
<div class="a" style="left:230px;top:676.3px;width:1291.5px;height:33.5px;background:#f4f4f4;border-top:1px solid #e6e6e6"></div>
<div class="a" style="left:230px;top:709.8px;width:1291.5px;height:6.8px;background:#f1f1f1"></div>
<div class="a" style="left:230px;top:709.8px;width:1171px;height:6.8px;background:#d4d4d4"></div>
<div class="vl" style="left:277.3px;top:543.5px;height:67.5px"></div>
<div class="vl" style="left:277.3px;top:677px;height:33px"></div>
<div class="vl" style="left:442px;top:543.5px;height:67.5px"></div>
<div class="vl" style="left:442px;top:677px;height:33px"></div>
<div class="vl" style="left:587.6px;top:543.5px;height:67.5px"></div>
<div class="vl" style="left:587.6px;top:677px;height:33px"></div>
<div class="vl" style="left:733px;top:543.5px;height:67.5px"></div>
<div class="vl" style="left:733px;top:677px;height:33px"></div>
<div class="vl" style="left:878.3px;top:543.5px;height:67.5px"></div>
<div class="vl" style="left:878.3px;top:677px;height:33px"></div>
<div class="vl" style="left:994.7px;top:543.5px;height:67.5px"></div>
<div class="vl" style="left:994.7px;top:677px;height:33px"></div>
<div class="vl" style="left:1111px;top:543.5px;height:67.5px"></div>
<div class="vl" style="left:1111px;top:677px;height:33px"></div>
<div class="vl" style="left:1266px;top:543.5px;height:67.5px"></div>
<div class="vl" style="left:1266px;top:677px;height:33px"></div>
<div class="vl" style="left:1459.4px;top:543.5px;height:67.5px"></div>
<div class="vl" style="left:1459.4px;top:677px;height:33px"></div>

<span class="t hdt" style="left:241.8px;top:552px;transform:scaleX(0.9160)">STT</span>
<span class="t hdt" style="left:288.2px;top:552px;transform:scaleX(0.8981)">Mã CCDC</span>
<span class="t hdt" style="left:453px;top:552px;transform:scaleX(0.8821)">Tên CCDC</span>
<span class="t hdt" style="left:598.2px;top:552px;transform:scaleX(0.8855)">Bộ phận sử dụng</span>
<span class="t hdt" style="left:743.6px;top:552px;transform:scaleX(0.8884)">Lý do ghi giảm</span>
<span class="t hdt" style="left:888.6px;top:552px;transform:scaleX(0.8895)">Đơn vị tính</span>
<span class="t hdt" style="left:1050.4px;top:552px;transform:scaleX(0.8617)">Số lượng</span>
<span class="t hdt" style="left:1213px;top:552px;transform:scaleX(0.8597)">Đơn giá</span>
<span class="t hdt" style="left:1390.3px;top:552px;transform:scaleX(0.9084)">Thành tiền</span>

<span class="t" style="left:250px;top:587px">1</span>
<span class="t" style="left:288.2px;top:587px;transform:scaleX(0.9001)">CCDC001.01</span>
<span class="t" style="left:453px;top:587px;transform:scaleX(0.8945)">CCDC 2024 1</span>
<span class="t" style="left:598.2px;top:587px;transform:scaleX(0.9479)">Khoa nghiên cứu</span>
<span class="t" style="left:743.6px;top:587px;transform:scaleX(0.9621)">Hỏng</span>
<span class="t" style="left:888.6px;top:587px;transform:scaleX(0.9172)">Cái</span>
<span class="t" style="left:1077px;top:587px;transform:scaleX(0.9205)">1,00</span>
<span class="t" style="left:1210.6px;top:587px;transform:scaleX(0.9489)">177.500</span>
<span class="t" style="left:1404.6px;top:587px;transform:scaleX(0.9489)">177.500</span>

<span class="t b" style="left:1077px;top:685px;color:#2b2b30;transform:scaleX(0.9560)">1,00</span>
<span class="t b" style="left:1209.4px;top:685px;color:#2b2b30;transform:scaleX(0.9787)">177.500</span>
<span class="t b" style="left:1403.4px;top:685px;color:#2b2b30;transform:scaleX(0.9787)">177.500</span>

<span class="t" style="left:240px;top:727.5px;transform:scaleX(0.9489)">Tổng số: <b>1</b> bản ghi</span>
<span class="t" style="left:1261.6px;top:727.5px;transform:scaleX(0.9793)">Số dòng/trang</span>
<span class="t" style="left:1353.2px;top:727.5px;transform:scaleX(0.9353)">100</span>
<svg style="left:1379.6px;top:732.2px" width="9.4" height="7" viewBox="0 0 9.4 7"><path d="M0.9 1 L4.7 5 L8.5 1" fill="none" stroke="#111" stroke-width="2"/></svg>
<span class="t" style="left:1420.6px;top:727.5px;font-size:11px;color:#9b9b9f">&lt;</span>
<span class="t" style="left:1437.6px;top:727.5px;transform:scaleX(0.9258)">Trang</span>
<span class="t b" style="left:1484px;top:727.5px;color:#2b2b30">1</span>
<span class="t" style="left:1505.2px;top:727.5px;font-size:11px;color:#9b9b9f">&gt;</span>

<!-- right edge shadow -->
<div class="a" style="left:1523.5px;top:560px;width:10.5px;height:200px;background:linear-gradient(90deg,rgba(60,64,72,0),rgba(60,64,72,.34));-webkit-mask-image:linear-gradient(180deg,transparent,#000 22%,#000 94%,transparent);mask-image:linear-gradient(180deg,transparent,#000 22%,#000 94%,transparent)"></div>
<!-- right blue tab -->
<div class="a" style="left:1521.8px;top:275.3px;width:14px;height:86.8px;background:#4262f0;border-radius:6px 0 0 6px;box-shadow:-1px 1px 4px rgba(0,0,0,.25)"></div>
<svg style="left:1526.6px;top:315px" width="6" height="9" viewBox="0 0 6 9"><path d="M5 0.8 L1.2 4.5 L5 8.2" fill="none" stroke="#fff" stroke-width="1.3"/></svg>
</div>


<!-- ============ ANNOTATIONS ============ -->
<svg style="left:0;top:0;z-index:60" width="1536" height="762" viewBox="0 0 1536 762">
  <g fill="none" stroke="#e01b1b" stroke-width="4">
    <rect x="6" y="161.2" width="197.5" height="48"/>
    <rect x="3.3" y="372.2" width="200.2" height="49.8"/>
    <rect x="1421" y="161.2" width="32.7" height="32.6"/>
    <rect x="1278.1" y="229.6" width="175.4" height="41.7"/>
  </g>
  <g fill="#fa4545">
    <circle cx="205.5" cy="211.6" r="19.3"/>
    <circle cx="191" cy="370.5" r="19.3"/>
    <circle cx="1398.3" cy="164.6" r="19.3"/>
  </g>
  <g fill="#fff" font-family="Liberation Sans, sans-serif" font-size="27" text-anchor="middle">
    <text x="205.5" y="221.2">1</text>
    <text x="191" y="380.1">2</text>
    <text x="1398.3" y="174.2">3</text>
  </g>
</svg>
<div id="frame"></div>
</div>
</body>
</html>
